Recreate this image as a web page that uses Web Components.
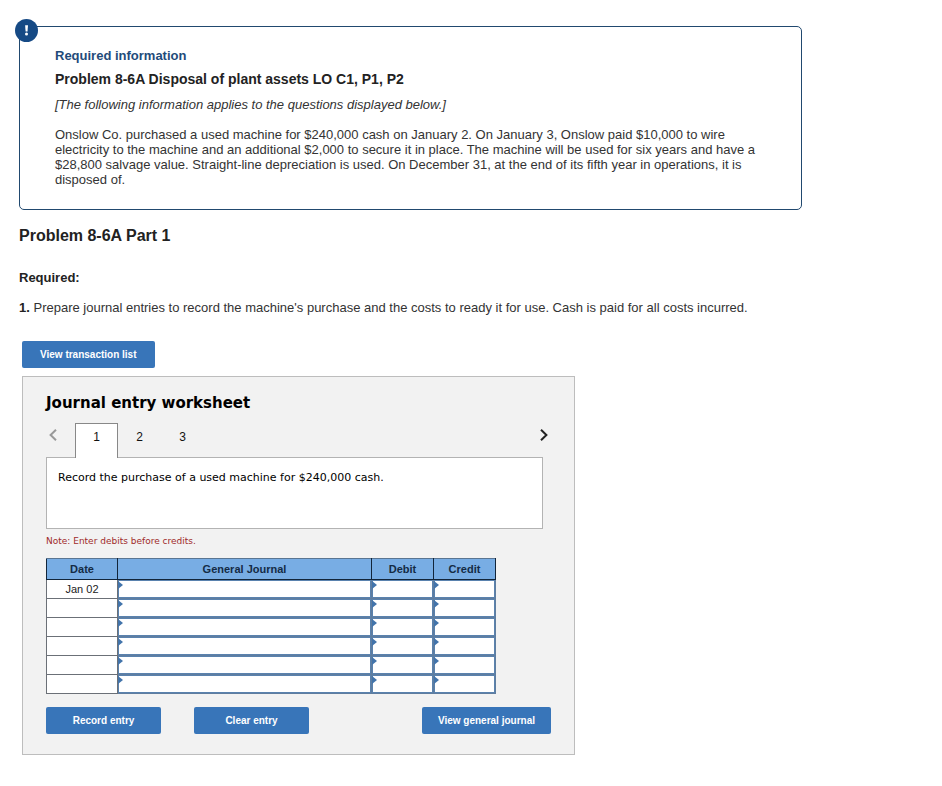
<!DOCTYPE html>
<html lang="en">
<head>
<meta charset="utf-8">
<title>Problem 8-6A Disposal of plant assets</title>
<style>
  body { margin: 0; background: #fff; color: #333; font: 13px/15px "Liberation Sans", Arial, sans-serif; }
</style>
</head>
<body>
<problem-page></problem-page>

<template id="t-page">
  <style>
    :host { display: block; padding: 26px 140px 31px 19px; }
    h2, h3, p { margin: 0; }
    h2 { color: #222; font-size: 16px; line-height: 20px; margin-top: 16px; }
    h3 { color: #222; font-size: 13px; line-height: 15px; margin-top: 24px; }
    p { margin-top: 15px; }
    b { color: #222; }
    .work { margin: 26px 0 0 3px; max-width: 553px; }
    .view { --button-padding: 18px; }
    journal-worksheet { margin-top: 8px; }
  </style>
  <info-card>
    <span slot="label">Required information</span>
    <span slot="title">Problem 8-6A Disposal of plant assets LO C1, P1, P2</span>
    <span slot="note">[The following information applies to the questions displayed below.]</span>
    Onslow Co. purchased a used machine for $240,000 cash on January 2. On January 3, Onslow paid $10,000 to wire electricity to the machine and an additional $2,000 to secure it in place. The machine will be used for six years and have a $28,800 salvage value. Straight-line depreciation is used. On December 31, at the end of its fifth year in operations, it is disposed of.
  </info-card>
  <h2>Problem 8-6A Part 1</h2>
  <h3>Required:</h3>
  <p><b>1.</b> Prepare journal entries to record the machine's purchase and the costs to ready it for use. Cash is paid for all costs incurred.</p>
  <div class="work">
    <action-button class="view">View transaction list</action-button>
    <journal-worksheet></journal-worksheet>
  </div>
</template>

<template id="t-card">
  <style>
    :host { display: block; position: relative; border: 1px solid #21496f; border-radius: 5px; padding: 21px 35px 22px; }
    .badge { position: absolute; left: -5px; top: -8px; width: 23px; height: 23px; }
    .label { color: #1f4b7a; font-size: 13px; line-height: 16px; font-weight: bold; }
    h1 { margin: 6px 0 0; color: #222; font-size: 14px; line-height: 18px; }
    .note { margin-top: 9px; line-height: 15px; font-style: italic; }
    .text { margin-top: 15px; line-height: 15px; }
  </style>
  <svg class="badge" viewBox="0 0 23 23" role="img" aria-label="Important">
    <circle cx="11.5" cy="11.5" r="11.5" fill="#164a85"/>
    <path d="M10.1 6.2h2.9l-.5 6.4h-1.9z" fill="#fff"/>
    <circle cx="11.5" cy="15" r="1.5" fill="#fff"/>
  </svg>
  <div class="label"><slot name="label"></slot></div>
  <h1><slot name="title"></slot></h1>
  <div class="note"><slot name="note"></slot></div>
  <div class="text"><slot></slot></div>
</template>

<template id="t-button">
  <style>
    :host { display: block; }
    button { display: block; box-sizing: border-box; min-width: 115px; height: 27px; margin: 0; padding: 0 var(--button-padding, 16px); border: 0; border-radius: 2px; background: #3875b9; color: #fff; font: bold 10px/27px "Liberation Sans", Arial, sans-serif; cursor: pointer; }
  </style>
  <button type="button"><slot></slot></button>
</template>

<template id="t-tabs">
  <style>
    :host { display: flex; height: 35px; font: 12px/26px "Liberation Sans", Arial, sans-serif; color: #111; }
    button { box-sizing: border-box; margin: 0; padding: 0 0 8px; border: 1px solid transparent; border-bottom: 0; background: none; color: inherit; font: inherit; width: 43px; height: 35px; cursor: pointer; }
    button[aria-selected="true"] { background: #fff; border-color: #888; }
    .tabs { display: flex; flex: 1; }
    .arrow { width: 29px; padding: 0 0 12px; display: flex; align-items: center; }
    .prev { padding-left: 2px; color: #999; }
    .next { justify-content: flex-end; padding-right: 2px; color: #222; }
    svg { width: 8px; height: 12px; }
    path { fill: none; stroke: currentColor; stroke-width: 2; }
  </style>
  <button class="arrow prev" type="button" aria-label="Previous"><svg viewBox="0 0 8 12"><path d="M7 .8 1.6 6 7 11.2"/></svg></button>
  <div class="tabs" role="tablist">
    <button type="button" role="tab" aria-selected="true">1</button>
    <button type="button" role="tab" aria-selected="false">2</button>
    <button type="button" role="tab" aria-selected="false">3</button>
  </div>
  <button class="arrow next" type="button" aria-label="Next"><svg viewBox="0 0 8 12"><path d="M1 .8 6.4 6 1 11.2"/></svg></button>
</template>

<template id="t-table">
  <style>
    :host { display: block; }
    table { width: 450px; max-width: 100%; table-layout: fixed; border-collapse: collapse; background: #fff; color: #222; font-size: 11px; line-height: 18px; }
    th, td { box-sizing: border-box; padding: 0; text-align: center; border: 1px solid #6b7077; }
    th { height: 21px; background: #78ade4; color: #142b45; border-color: #12253a; border-top-color: #5a7592; }
    td { height: 19px; font-weight: normal; }
    td.in { position: relative; border-color: #5f7d9f; }
    td.in::before { content: ""; position: absolute; left: 0; top: 1px; width: 5px; height: 8px; background: #4274ab; clip-path: polygon(0 0, 100% 50%, 0 100%); }
    input { display: block; box-sizing: border-box; width: 100%; height: 18px; margin: 0; padding: 0 6px; border: 1px solid #5a82ae; border-radius: 0; background: #fff; font: inherit; outline: 0; }
    .date { width: 71px; } .amount { width: 62px; }
  </style>
  <table>
    <colgroup><col class="date"><col><col class="amount"><col class="amount"></colgroup>
    <thead><tr><th scope="col">Date</th><th scope="col">General Journal</th><th scope="col">Debit</th><th scope="col">Credit</th></tr></thead>
    <tbody></tbody>
  </table>
</template>

<template id="t-sheet">
  <style>
    :host { display: block; box-sizing: border-box; border: 1px solid #bdbdbd; background: #f2f2f2; padding: 16px 23px 20px; }
    h2 { margin: 0 0 10px; color: #000; font: bold 15px/20px "DejaVu Sans", Verdana, sans-serif; }
    .desc { box-sizing: border-box; margin: 0 8px 0 0; min-height: 72px; padding: 12px 11px; border: 1px solid #b3b3b3; background: #fff; color: #000; font: 11px/15px "DejaVu Sans", Verdana, sans-serif; }
    tab-strip { position: relative; z-index: 1; margin-bottom: -1px; }
    .warn { margin: 5px 0 10px; color: #a02a2a; font: 9px/14px "DejaVu Sans", Verdana, sans-serif; }
    .actions { display: flex; margin-top: 13px; gap: 33px; }
    .last { margin-left: auto; }
  </style>
  <h2>Journal entry worksheet</h2>
  <tab-strip></tab-strip>
  <div class="desc">Record the purchase of a used machine for $240,000 cash.</div>
  <div class="warn">Note: Enter debits before credits.</div>
  <entry-table></entry-table>
  <div class="actions">
    <action-button>Record entry</action-button>
    <action-button>Clear entry</action-button>
    <action-button class="last">View general journal</action-button>
  </div>
</template>

<script>
  class Base extends HTMLElement {
    constructor() {
      super();
      const t = document.getElementById(this.constructor.template);
      this.attachShadow({ mode: 'open' }).append(t.content.cloneNode(true));
    }
  }
  customElements.define('info-card', class extends Base { static template = 't-card'; });
  customElements.define('action-button', class extends Base { static template = 't-button'; });
  customElements.define('tab-strip', class extends Base { static template = 't-tabs'; });
  customElements.define('entry-table', class extends Base {
    static template = 't-table';
    connectedCallback() {
      const body = this.shadowRoot.querySelector('tbody');
      if (body.rows.length) return;
      for (let i = 0; i < 6; i++) {
        const row = body.insertRow();
        row.insertCell().textContent = i ? '' : 'Jan 02';
        for (const name of ['General journal', 'Debit', 'Credit']) {
          const cell = row.insertCell();
          cell.className = 'in';
          const input = document.createElement('input');
          input.type = 'text';
          input.setAttribute('aria-label', name + ', row ' + (i + 1));
          cell.append(input);
        }
      }
    }
  });
  customElements.define('journal-worksheet', class extends Base { static template = 't-sheet'; });
  customElements.define('problem-page', class extends Base { static template = 't-page'; });
</script>
</body>
</html>
